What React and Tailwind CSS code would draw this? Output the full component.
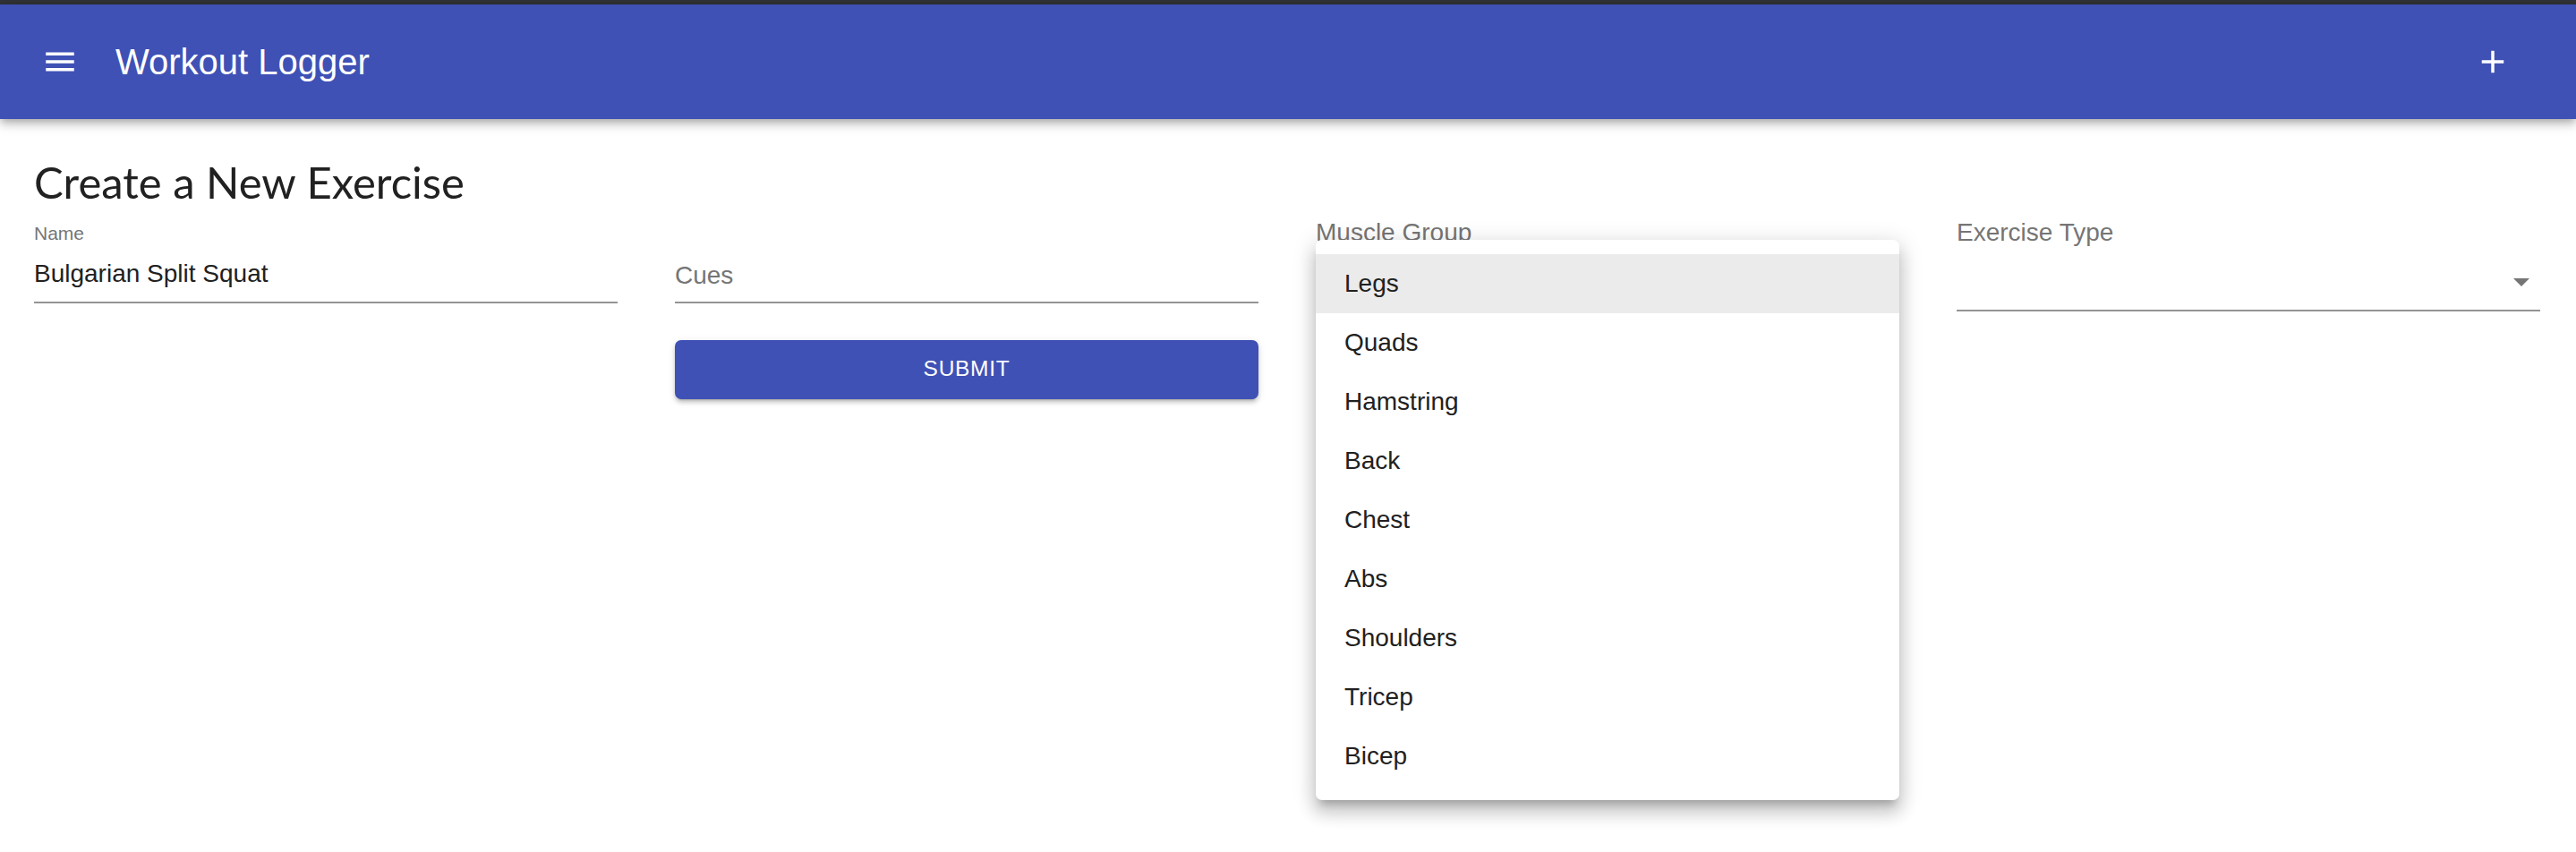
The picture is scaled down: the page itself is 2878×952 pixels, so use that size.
import React from "react";

const items = ["Legs", "Quads", "Hamstring", "Back", "Chest", "Abs", "Shoulders", "Tricep", "Bicep"];

function Arrow() {
  return (
    <svg width="18" height="9" viewBox="0 0 18 9" className="block">
      <path d="M0 0 L18 0 L9 9 Z" fill="#757575" />
    </svg>
  );
}

export default function App() {
  return (
    <div className="min-h-[952px] bg-white font-['Liberation_Sans',Arial,Helvetica,sans-serif]">
      <div className="h-[5px] bg-[#313235]" />
      <header className="relative z-10 flex h-[128px] items-center bg-[#3f51b5] pl-[46px] pr-[72px] shadow-[0_3px_7px_-2px_rgba(0,0,0,0.2),0_7px_9px_0_rgba(0,0,0,0.14),0_2px_18px_0_rgba(0,0,0,0.12)]">
        <svg width="42" height="42" viewBox="0 0 24 24" fill="#ffffff">
          <path d="M3 18h18v-2H3v2zm0-5h18v-2H3v2zm0-7v2h18V6H3z" />
        </svg>
        <h1 className="ml-[41px] text-[40px] leading-[40px] text-white">Workout Logger</h1>
        <div className="flex-1" />
        <svg width="42" height="42" viewBox="0 0 24 24" fill="#ffffff">
          <path d="M19 13h-6v6h-2v-6H5v-2h6V5h2v6h6v2z" />
        </svg>
      </header>

      <main className="pl-[38px] pr-[40px]">
        <h2 className="mt-[41px] font-['Lato',sans-serif] text-[49px] leading-[1.2] text-[#212121]">
          Create a New Exercise
        </h2>

        <div className="mt-[13px] grid grid-cols-4 gap-x-[64px]">
          {/* Name */}
          <div className="pt-[4px]">
            <div className="text-[21px] leading-[21px] text-[#757575]">Name</div>
            <div className="mt-[21px] border-b-2 border-[#949494] pb-[17px] text-[28px] leading-[28px] text-[#212121]">
              Bulgarian Split Squat
            </div>
          </div>

          {/* Cues */}
          <div className="pt-[48px]">
            <div className="border-b-2 border-[#949494] pb-[15px] text-[28px] leading-[28px] text-[#757575]">Cues</div>
            <button className="mt-[41px] h-[66px] w-full rounded-[7px] bg-[#3f51b5] text-[24.5px] tracking-[0.7px] text-white shadow-[0_5px_2px_-4px_rgba(0,0,0,0.2),0_4px_4px_0_rgba(0,0,0,0.14),0_2px_9px_0_rgba(0,0,0,0.12)]">
              SUBMIT
            </button>
          </div>

          {/* Muscle Group */}
          <div className="relative">
            <div className="text-[28px] leading-[28px] text-[#757575]">Muscle Group</div>
            <div className="flex h-[74px] items-end justify-end border-b-2 border-[#949494]">
              <div className="mb-[26px] mr-[12px]">
                <Arrow />
              </div>
            </div>
            <div className="absolute left-0 top-[22px] z-20 w-full rounded-[7px] bg-white py-[16px] shadow-[0_9px_9px_-5px_rgba(0,0,0,0.2),0_14px_18px_2px_rgba(0,0,0,0.14),0_5px_25px_4px_rgba(0,0,0,0.12)]">
              {items.map((it, i) => (
                <div
                  key={it}
                  className={
                    "flex h-[66px] items-center pl-[32px] text-[28px] leading-[28px] text-[#212121] " +
                    (i === 0 ? "bg-[#ebebeb]" : "bg-white")
                  }
                >
                  {it}
                </div>
              ))}
            </div>
          </div>

          {/* Exercise Type */}
          <div>
            <div className="text-[28px] leading-[28px] text-[#757575]">Exercise Type</div>
            <div className="flex h-[74px] items-end justify-end border-b-2 border-[#949494]">
              <div className="mb-[26px] mr-[12px]">
                <Arrow />
              </div>
            </div>
          </div>
        </div>
      </main>
    </div>
  );
}
